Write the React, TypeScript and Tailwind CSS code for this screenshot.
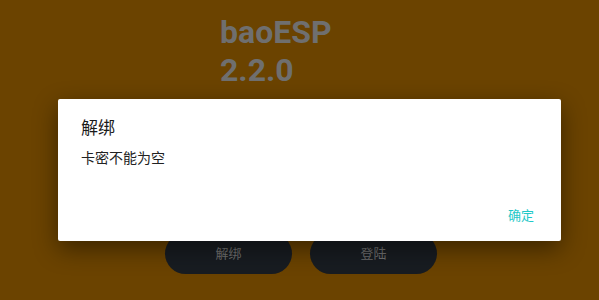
const App = () => {
    return (
        <div className="relative w-[599px] h-[300px] overflow-hidden bg-[#6b4300]" style={{ fontFamily: 'Roboto, "Noto Sans CJK SC", sans-serif' }}>

            <div className="flex flex-col h-full">
                <div className="pl-[220px] pt-[13px] text-[32px] leading-[38px] font-bold text-[#6f6f6f]">
                    <p>baoESP</p>
                    <p>2.2.0</p>
                </div>

                <div className="mt-auto mb-[26px] flex justify-center gap-[18px] pl-[3px]">
                    <button className="w-[127px] h-[41px] rounded-full bg-[#181c21] text-[13px] text-[#6f6f6f]">解绑</button>
                    <button className="w-[127px] h-[41px] rounded-full bg-[#181c21] text-[13px] text-[#6f6f6f]">登陆</button>
                </div>
            </div>

            <div className="absolute left-[58px] top-[99px] w-[503px] h-[142px] bg-white rounded-[2px] shadow-[0_8px_24px_rgba(0,0,0,0.45)] flex flex-col">
                <div className="px-[23px] pt-[17px] flex-1">
                    <p className="text-[17px] leading-[24px] text-[#1a1a1a]">解绑</p>
                    <p className="mt-[8px] text-[14px] leading-[20px] text-[#222]">卡密不能为空</p>
                </div>
                <div className="flex justify-end px-[27px] pb-[16px]">
                    <span className="text-[13px] text-[#1fc8c8]">确定</span>
                </div>
            </div>

        </div>
    )
}

export default App;
